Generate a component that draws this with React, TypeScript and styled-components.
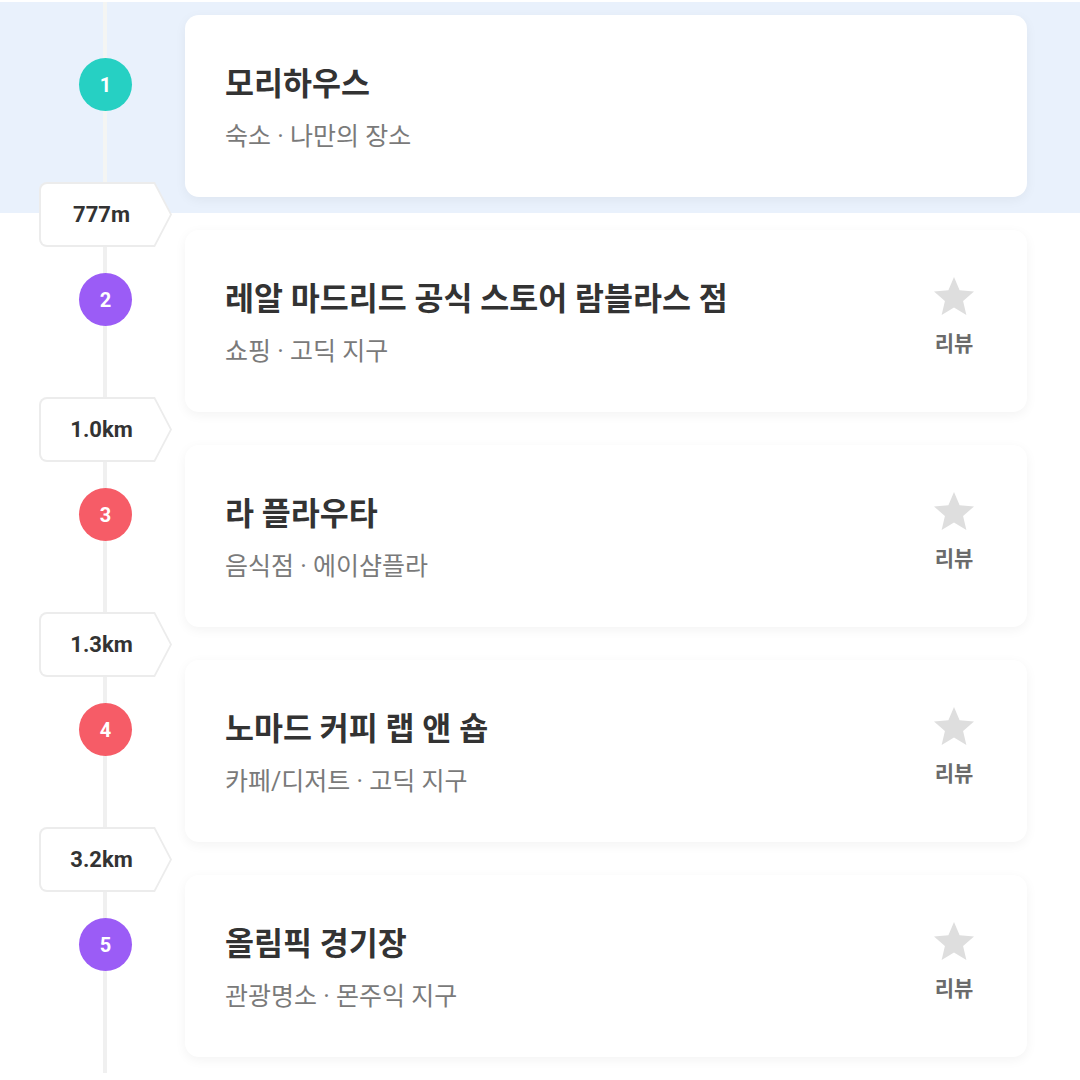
import styled, { createGlobalStyle } from 'styled-components'

const GlobalStyle = createGlobalStyle`
  html, body {
    margin: 0;
    padding: 0;
    background: #fff;
  }
  body {
    font-family: Roboto, 'Noto Sans CJK KR', sans-serif;
    color: #333;
  }
`

type Place = {
  name: string
  meta: string
  color: string
  distance?: string
  review?: boolean
}

const places: Place[] = [
  { name: '모리하우스', meta: '숙소 · 나만의 장소', color: '#26d0c3' },
  {
    name: '레알 마드리드 공식 스토어 람블라스 점',
    meta: '쇼핑 · 고딕 지구',
    color: '#9b5cf6',
    distance: '777m',
    review: true,
  },
  {
    name: '라 플라우타',
    meta: '음식점 · 에이샴플라',
    color: '#f65c67',
    distance: '1.0km',
    review: true,
  },
  {
    name: '노마드 커피 랩 앤 숍',
    meta: '카페/디저트 · 고딕 지구',
    color: '#f65c67',
    distance: '1.3km',
    review: true,
  },
  {
    name: '올림픽 경기장',
    meta: '관광명소 · 몬주익 지구',
    color: '#9b5cf6',
    distance: '3.2km',
    review: true,
  },
]

const Page = styled.div`
  width: 1080px;
  padding-top: 2px;
`

const Row = styled.div<{ $active?: boolean }>`
  position: relative;
  display: grid;
  grid-template-columns: 185px 842px;
  align-items: start;
  padding: ${(p) => (p.$active ? '13px' : '17px')} 0 16px;
  background-color: ${(p) => (p.$active ? '#e9f1fc' : '#fff')};
  background-image: linear-gradient(
    to right,
    transparent 103px,
    ${(p) => (p.$active ? '#f4f5f3' : '#f0f0f0')} 103px,
    ${(p) => (p.$active ? '#f4f5f3' : '#f0f0f0')} 107px,
    transparent 107px
  );
`

const Marker = styled.div`
  padding: 43px 0 0 79px;
`

const Dot = styled.div<{ $color: string }>`
  width: 53px;
  height: 53px;
  border-radius: 50%;
  background: ${(p) => p.$color};
  color: #fff;
  font-weight: 700;
  font-size: 20px;
  display: flex;
  align-items: center;
  justify-content: center;
`

const Card = styled.div`
  height: 182px;
  box-sizing: border-box;
  background: #fff;
  border-radius: 14px;
  box-shadow: 0 3px 12px rgba(0, 0, 0, 0.05);
  display: flex;
  align-items: flex-start;
  justify-content: space-between;
  padding: 0 53px 0 40px;
`

const Info = styled.div`
  padding-top: 50px;
`

const Title = styled.div`
  font-size: 31.5px;
  line-height: 40px;
  font-weight: 700;
  color: #333;
`

const Meta = styled.div`
  margin-top: 16px;
  font-size: 25px;
  line-height: 32px;
  color: #7a7a7a;
`

const Review = styled.div`
  padding-top: 47px;
  display: flex;
  flex-direction: column;
  align-items: center;
  gap: 15px;
`

const ReviewLabel = styled.div`
  font-size: 21px;
  line-height: 28px;
  font-weight: 700;
  color: #6b6b6b;
`

const Distance = styled.div`
  position: absolute;
  left: 39px;
  top: -31px;
  width: 133px;
  height: 65px;
  box-sizing: border-box;
  padding: 2px;
  border-radius: 8px;
  background: #ececec;
  clip-path: polygon(0 0, 116px 0, 133px 50%, 116px 100%, 0 100%);
`

const DistanceInner = styled.div`
  height: 100%;
  border-radius: 6px;
  background: #fff;
  clip-path: polygon(0 0, 113px 0, 129px 50%, 113px 100%, 0 100%);
  display: flex;
  align-items: center;
  justify-content: center;
  padding-right: 8px;
  box-sizing: border-box;
  font-size: 22px;
  font-weight: 700;
  color: #333;
`

function Star() {
  return (
    <svg width="40" height="38" viewBox="2 2 20 19">
      <path
        fill="#dedede"
        d="M12 17.27L18.18 21l-1.64-7.03L22 9.24l-7.19-.61L12 2 9.19 8.63 2 9.24l5.46 4.73L5.82 21z"
      />
    </svg>
  )
}

export default function App() {
  return (
    <Page>
      <GlobalStyle />
      {places.map((p, i) => (
        <Row key={p.name} $active={i === 0}>
          {p.distance && (
            <Distance>
              <DistanceInner>{p.distance}</DistanceInner>
            </Distance>
          )}
          <Marker>
            <Dot $color={p.color}>{i + 1}</Dot>
          </Marker>
          <Card>
            <Info>
              <Title>{p.name}</Title>
              <Meta>{p.meta}</Meta>
            </Info>
            {p.review && (
              <Review>
                <Star />
                <ReviewLabel>리뷰</ReviewLabel>
              </Review>
            )}
          </Card>
        </Row>
      ))}
    </Page>
  )
}
